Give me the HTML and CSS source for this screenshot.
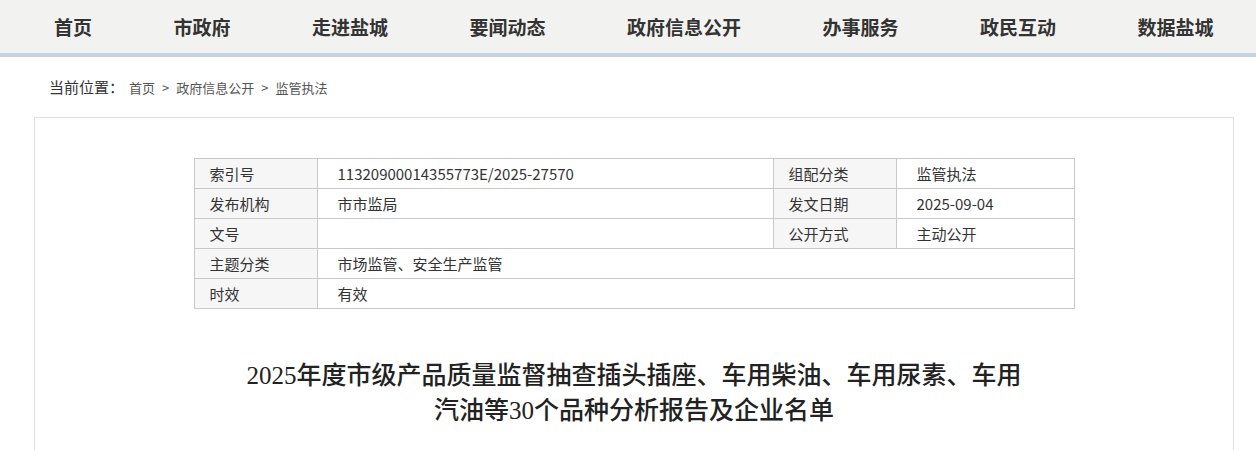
FILE: index.html
```html
<html>
<head>
<meta charset="utf-8">
<link rel="stylesheet" href="styles.css">
</head>
<body>
<header class="nav">
	<ul class="nav_list">
		<li><a href="#">首页</a></li>
		<li><a href="#">市政府</a></li>
		<li><a href="#">走进盐城</a></li>
		<li><a href="#">要闻动态</a></li>
		<li><a href="#">政府信息公开</a></li>
		<li><a href="#">办事服务</a></li>
		<li><a href="#">政民互动</a></li>
		<li><a href="#">数据盐城</a></li>
	</ul>
</header>
<div class="crumb">
	<span class="crumb_label">当前位置：</span><a href="#">首页</a><span class="crumb_sep">&gt;</span><a href="#">政府信息公开</a><span class="crumb_sep">&gt;</span><a href="#">监管执法</a>
</div>
<section class="article">
	<table class="meta_table">
		<colgroup>
			<col style="width:123px">
			<col style="width:456px">
			<col style="width:123px">
			<col style="width:178px">
		</colgroup>
		<tr>
			<td class="meta_key">索引号</td>
			<td class="meta_val">11320900014355773E/2025-27570</td>
			<td class="meta_key">组配分类</td>
			<td class="meta_val">监管执法</td>
		</tr>
		<tr>
			<td class="meta_key">发布机构</td>
			<td class="meta_val">市市监局</td>
			<td class="meta_key">发文日期</td>
			<td class="meta_val">2025-09-04</td>
		</tr>
		<tr>
			<td class="meta_key">文号</td>
			<td class="meta_val"></td>
			<td class="meta_key">公开方式</td>
			<td class="meta_val">主动公开</td>
		</tr>
		<tr>
			<td class="meta_key">主题分类</td>
			<td class="meta_val" colspan="3">市场监管、安全生产监管</td>
		</tr>
		<tr>
			<td class="meta_key">时效</td>
			<td class="meta_val" colspan="3">有效</td>
		</tr>
	</table>
	<h1 class="article_title">2025年度市级产品质量监督抽查插头插座、车用柴油、车用尿素、车用<br/>汽油等30个品种分析报告及企业名单</h1>
</section>
</body>
</html>
```

FILE: styles.css
```css
html, body{
	margin:0;
	padding:0;
	font-family: "Noto Sans CJK SC", "Noto Sans", sans-serif;
	color:#333;
	background:#fff;
}
a{
	color:inherit;
	text-decoration:none;
}
.nav{
	height:53px;
	background:#f2f2f0;
	border-bottom:4px solid #c5d3e5;
}
.nav_list{
	list-style-type:none;
	margin:0;
	padding:0 0 0 54px;
	display:flex;
	gap:81.5px;
	height:100%;
	align-items:center;
}
.nav_list li a{
	font-size:19px;
	font-weight:bold;
	color:#333;
	line-height:53px;
	white-space:nowrap;
}
.crumb{
	padding:19px 0 18px 49px;
	line-height:22px;
	font-size:13px;
	color:#555;
}
.crumb_label{
	font-size:15px;
	color:#333;
	margin-right:5px;
}
.crumb_sep{
	margin:0 7px;
}
.article{
	box-sizing:border-box;
	width:1200px;
	margin-left:34px;
	border:1px solid #e2e2e2;
	border-bottom:none;
	padding-top:40px;
	min-height:340px;
}
.meta_table{
	width:880px;
	margin:0 auto;
	border-collapse:collapse;
	table-layout:fixed;
	font-size:15px;
	color:#333;
}
.meta_table td{
	border:1px solid #c9c9c9;
	height:30px;
	padding:0;
	line-height:20px;
	white-space:nowrap;
}
.meta_key{
	background:#f6f6f6;
	padding-left:15px !important;
}
.meta_val{
	padding-left:20px !important;
}
.article_title{
	margin:49px 0 0 0;
	font-family: "Liberation Serif", "Noto Sans CJK SC", serif;
	font-size:25px;
	line-height:35px;
	font-weight:500;
	text-align:center;
	color:#222;
}
```
